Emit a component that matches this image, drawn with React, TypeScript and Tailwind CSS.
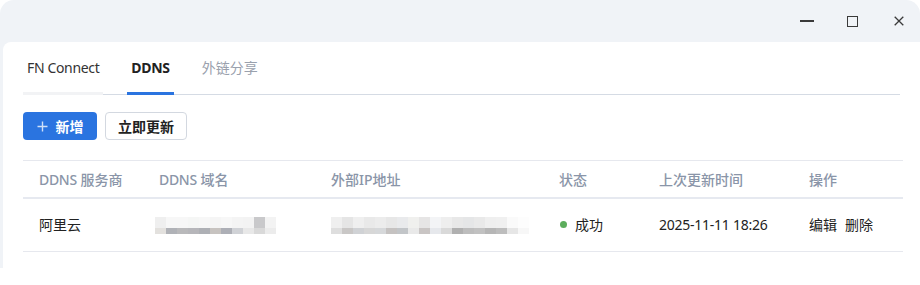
import React from "react";

const domainTop = ["#efefef","#f7f7f7","#f7f7f7","#f5f6f5","#f7f7f7","#f5f5f5","#f7f7f7","#f4f4f4","#f3f3f3","#c9c9cb","#f3f3f3"];
const domainBot = ["#e3e1de","#b0b2b7","#b9b9bb","#b6b6ba","#aeb0b5","#c7c3c0","#adafb6","#d0d2d6","#e8e8e8","#d9d9d9","#ececec"];
const ipTop = ["#efefef","#e5e5e5","#efefef","#e9e9e9","#ececec","#e7e7e7","#e9eaec","#f0f0ee","#e6e5e5","#f3f4f6","#eeeeee","#e8e8e8","#e5e6e7","#e9e9e9","#efefef","#f0f0f0","#fafafa","#fdfdfd"];
const ipBot = ["#dedede","#c9c7c6","#d0d2d5","#d7d7d7","#d6d8da","#c5c2c1","#c2c5c8","#e9e9e9","#c9c5c4","#e6e8ec","#d9d9d9","#b0b0b0","#bdbdbd","#c1c1c1","#b6b6b6","#bdbdbd","#e6e6e6","#f7f7f7"];

function Mosaic({ top, bot }: { top: string[]; bot: string[] }) {
  return (
    <div className="flex flex-col">
      <div className="flex">
        {top.map((c, i) => (
          <div key={i} className="w-[11px] h-[11px]" style={{ background: c }} />
        ))}
      </div>
      <div className="flex">
        {bot.map((c, i) => (
          <div key={i} className="w-[11px] h-[6px]" style={{ background: c }} />
        ))}
      </div>
    </div>
  );
}

export default function App() {
  const font = { fontFamily: '"Noto Sans", "Noto Sans CJK SC", sans-serif' };
  return (
    <div className="w-[920px] h-[285px] bg-white overflow-hidden" style={font}>
      <div className="h-[268px] bg-[#f0f3f7] rounded-t-[14px] flex flex-col pl-[3px]">
        {/* title bar */}
        <div className="h-[42px] flex items-center justify-end shrink-0 pr-[16px]">
          <div className="w-[14px] h-[1.5px] bg-[#3a3a3a]" />
          <div className="w-[11px] h-[11px] border border-[#3a3a3a] ml-[33px]" />
          <svg width="10" height="10" viewBox="0 0 10 10" className="ml-[36px]">
            <path d="M0.7 0.7L9.3 9.3M9.3 0.7L0.7 9.3" stroke="#3a3a3a" strokeWidth="1.3" />
          </svg>
        </div>
        {/* content */}
        <div className="flex-1 bg-white rounded-tl-[8px] px-[20px] text-[14px]">
          {/* tabs */}
          <div className="flex h-[53px] border-b border-[#d5dbe4] gap-[24px]">
            <div className="px-[4px] flex items-center text-[#333] border-b-[3px] border-[#f2f3f5] -mb-px pt-[1px] tracking-[-0.35px]">
              FN Connect
            </div>
            <div className="px-[4px] flex items-center text-[#222] font-bold border-b-[3px] border-[#2a74e0] -mb-px pt-[1px] tracking-[-0.3px]">
              DDNS
            </div>
            <div className="px-[4px] flex items-center text-[#9aa1ad] border-b-[3px] border-transparent -mb-px pt-[1px]">
              外链分享
            </div>
          </div>
          {/* buttons */}
          <div className="flex gap-[8px] mt-[17px]">
            <button className="w-[74px] h-[28px] rounded-[4px] bg-[#2a74e0] text-white font-bold flex items-center justify-center gap-[8px]">
              <svg width="11" height="11" viewBox="0 0 11 11">
                <path d="M5.5 0.5V10.5M0.5 5.5H10.5" stroke="#cfe0f8" strokeWidth="1.4" />
              </svg>
              <span>新增</span>
            </button>
            <button className="w-[82px] h-[28px] rounded-[4px] border border-[#d3d8e0] text-[#222] font-bold flex items-center justify-center">
              立即更新
            </button>
          </div>
          {/* table */}
          <div className="mt-[20px] w-[880px] border-t border-[#e6e8ee]">
            <div className="flex h-[38px] items-center border-b-2 border-[#e6e9f0] text-[#8a95a8] font-medium">
              <div className="w-[120px] pl-[16px]">
                <span className="tracking-[-0.3px]">DDNS</span> 服务商
              </div>
              <div className="w-[172px] pl-[16px]">
                <span className="tracking-[-0.3px]">DDNS</span> 域名
              </div>
              <div className="w-[228px] pl-[16px]">外部IP地址</div>
              <div className="w-[100px] pl-[16px]">状态</div>
              <div className="w-[150px] pl-[16px]">上次更新时间</div>
              <div className="flex-1 pl-[16px]">操作</div>
            </div>
            <div className="flex h-[53px] items-center border-b border-[#e6e8ee] text-[#222]">
              <div className="w-[120px] pl-[16px] -mt-[1px]">阿里云</div>
              <div className="w-[172px] pl-[12px] pt-[1px]">
                <Mosaic top={domainTop} bot={domainBot} />
              </div>
              <div className="w-[228px] pl-[16px] pt-[1px]">
                <Mosaic top={ipTop} bot={ipBot} />
              </div>
              <div className="w-[100px] pl-[16px] flex items-center gap-[8px] -mt-[1px]">
                <span className="w-[7px] h-[7px] rounded-full bg-[#5cad5c] ml-[1px]" />
                <span>成功</span>
              </div>
              <div className="w-[150px] pl-[16px] tracking-[-0.25px] -mt-[1px]">2025-11-11 18:26</div>
              <div className="flex-1 pl-[16px] flex gap-[8px] -mt-[1px]">
                <span>编辑</span>
                <span>删除</span>
              </div>
            </div>
          </div>
        </div>
      </div>
    </div>
  );
}
